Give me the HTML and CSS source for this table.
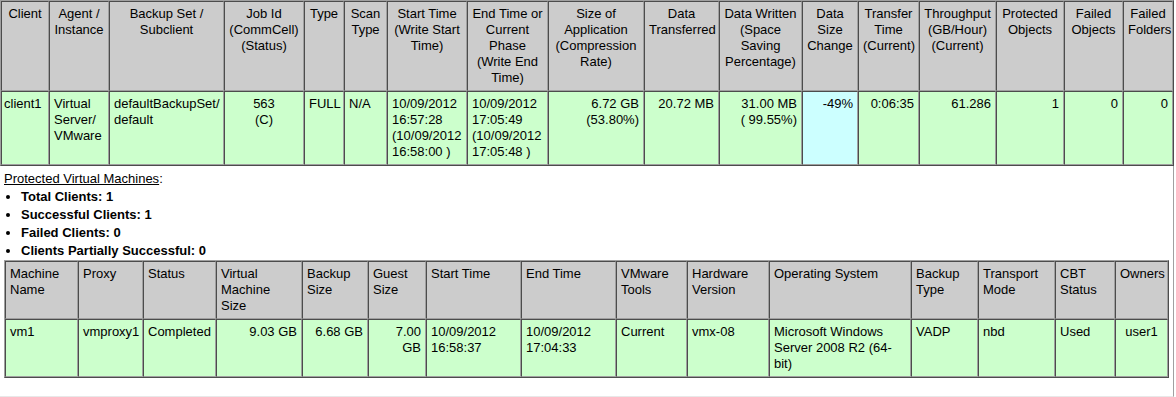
FILE: index.html
```html
<!DOCTYPE html>
<html lang="en">
<head>
  <meta charset="UTF-8">
  <title>Backup Job Summary</title>
  <link rel="stylesheet" href="styles.css">
</head>
<body>

<div class="report">

  <table class="jobs">
    <tr>
      <th width="48">Client</th>
      <th width="60">Agent / Instance</th>
      <th width="115">Backup Set / Subclient</th>
      <th width="80">Job Id (CommCell) (Status)</th>
      <th width="40">Type</th>
      <th width="43">Scan Type</th>
      <th width="80">Start Time (Write Start Time)</th>
      <th width="81">End Time or Current Phase (Write End Time)</th>
      <th width="96">Size of Application (Compression Rate)</th>
      <th width="75">Data Transferred</th>
      <th width="83">Data Written (Space Saving Percentage)</th>
      <th width="56">Data Size Change</th>
      <th width="61">Transfer Time (Current)</th>
      <th width="77">Throughput (GB/Hour) (Current)</th>
      <th width="68">Protected Objects</th>
      <th width="59">Failed Objects</th>
      <th width="50">Failed Folders</th>
    </tr>
    <tr>
      <td class="first">client1</td>
      <td>Virtual Server/ VMware</td>
      <td>defaultBackupSet/ default</td>
      <td class="mid">563<br>(C)</td>
      <td>FULL</td>
      <td>N/A</td>
      <td>10/09/2012 16:57:28 (10/09/2012 16:58:00 )</td>
      <td>10/09/2012 17:05:49 (10/09/2012 17:05:48 )</td>
      <td class="num">6.72 GB<br>(53.80%)</td>
      <td class="num">20.72 MB</td>
      <td class="num">31.00 MB<br>( 99.55%)</td>
      <td class="num change">-49%</td>
      <td class="num">0:06:35</td>
      <td class="num">61.286</td>
      <td class="num">1</td>
      <td class="num">0</td>
      <td class="num">0</td>
    </tr>
  </table>

  <div class="vms">
    <u>Protected Virtual Machines</u>:
    <ul class="totals">
      <li>Total Clients: 1</li>
      <li>Successful Clients: 1</li>
      <li>Failed Clients: 0</li>
      <li>Clients Partially Successful: 0</li>
    </ul>

    <table class="machines">
      <tr>
        <th width="73">Machine Name</th>
        <th width="65">Proxy</th>
        <th width="73">Status</th>
        <th width="86">Virtual Machine Size</th>
        <th width="66">Backup Size</th>
        <th width="58">Guest Size</th>
        <th width="95">Start Time</th>
        <th width="95">End Time</th>
        <th width="71">VMware Tools</th>
        <th width="82">Hardware Version</th>
        <th width="142">Operating System</th>
        <th width="67">Backup Type</th>
        <th width="77">Transport Mode</th>
        <th width="60">CBT Status</th>
        <th width="53">Owners</th>
      </tr>
      <tr>
        <td>vm1</td>
        <td>vmproxy1</td>
        <td>Completed</td>
        <td class="num">9.03 GB</td>
        <td class="num">6.68 GB</td>
        <td class="num">7.00<br>GB</td>
        <td>10/09/2012 16:58:37</td>
        <td>10/09/2012 17:04:33</td>
        <td>Current</td>
        <td>vmx-08</td>
        <td>Microsoft Windows Server 2008 R2 (64-bit)</td>
        <td>VADP</td>
        <td>nbd</td>
        <td>Used</td>
        <td class="mid">user1</td>
      </tr>
    </table>
  </div>

</div>

</body>
</html>
```

FILE: styles.css
```css
body {
  margin: 0;
  background: #fff;
  color: #000;
  font-family: "Liberation Sans", Arial, sans-serif;
  font-size: 13px;
}
.report {
  width: 1174px;
  height: 397px;
  box-sizing: border-box;
  border-right: 1px solid #a0a0a0;
  border-bottom: 1px solid #e8e8e8;
}
table {
  table-layout: fixed;
  border-collapse: separate;
  border-spacing: 0;
  border: 1px outset #a0a0a0;
  line-height: 16px;
}
th, td {
  box-sizing: border-box;
  border: 1px inset #a0a0a0;
  padding: 4px;
  vertical-align: top;
  text-align: left;
  font-weight: normal;
}
th {
  background: #cccccc;
}
td {
  background: #ccffcc;
}
.jobs {
  width: 1174px;
}
.jobs th {
  text-align: center;
}
.jobs td.first {
  padding-left: 2px;
}
.num {
  text-align: right;
}
.mid {
  text-align: center;
}
td.change {
  background: #ccffff;
}
.vms {
  padding: 4px;
  line-height: 18px;
}
.totals {
  margin: 0;
  padding-left: 17px;
  font-weight: bold;
}
.machines {
  width: 1165px;
}
```
